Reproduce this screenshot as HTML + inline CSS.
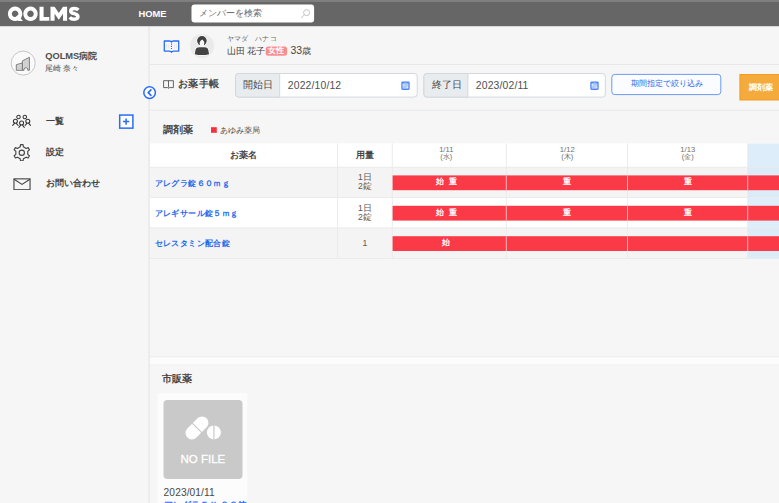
<!DOCTYPE html>
<html lang="ja">
<head>
<meta charset="utf-8">
<title>QOLMS</title>
<style>
*{box-sizing:border-box;margin:0;padding:0}
html,body{width:779px;height:503px;overflow:hidden;background:#f6f6f6;font-family:"Liberation Sans",sans-serif;color:#444}
.a{position:absolute;white-space:nowrap;line-height:1}
#home{left:138.5px;top:9.2px;font-size:9.4px;font-weight:bold;color:#fff}
#search{left:191.5px;top:4.5px;width:122.5px;height:18px}
#search span{left:7.6px;top:4.4px;font-size:8.6px;color:#6a6a6a}
.sm{font-size:9.2px;font-weight:bold;color:#444}

.th{top:150.9px;text-align:center;font-size:8.6px;font-weight:bold;color:#444}
.dt{width:120.5px;text-align:center;font-size:7.4px;color:#707070}
.dn{left:154.8px;font-size:8.4px;font-weight:bold;color:#2469ec;letter-spacing:.35px}
.ds{left:338px;width:54px;text-align:center;font-size:8.6px;color:#5a5a5a}
.rt{width:120.5px;text-align:center;font-size:8.2px;font-weight:bold;color:#fff}
</style>
</head>
<body>
<svg class="a" id="bg" style="left:0;top:0" width="779" height="503" viewBox="0 0 779 503">
<!-- page / sidebar -->
<rect x="0" y="0" width="779" height="503" fill="#f6f6f6"/>
<rect x="148.2" y="26" width="1.7" height="477" fill="#eaeaec"/>
<!-- header -->
<rect x="0" y="0" width="779" height="26.2" fill="#666"/>
<rect x="0" y="0" width="779" height="2" fill="#7f7f7f"/>
<rect x="191.5" y="4.4" width="122.6" height="18.2" rx="3" fill="#fff"/>
<!-- logo -->
<g fill="#fff" fill-rule="evenodd"><title>QOLMS</title>
<path d="M15.1 6.6 a7.2 7.2 0 1 0 0.001 0Z M15.1 10.5 a3.3 3.3 0 1 1 -0.001 0Z"/>
<path d="M15.2 17.2 L18.0 15.0 L22.9 21 H18.3Z"/>
<path d="M30.5 6.6 a7.2 7.2 0 1 0 0.001 0Z M30.5 10.5 a3.3 3.3 0 1 1 -0.001 0Z"/>
<path d="M39.5 6.8 h4.1 v10.3 h5.7 v3.7 h-9.8Z"/>
<path d="M50.5 20.8 V6.8 h4.1 l4.2 6.3 l4.2 -6.3 h4.1 V20.8 h-4.1 V13.7 l-4.2 6.1 l-4.2 -6.1 V20.8Z"/>
</g>
<path d="M78.4 9.9 C77.3 8.8 75.9 8.4 74.4 8.4 C72.3 8.4 70.7 9.3 70.7 10.9 C70.7 12.8 72.6 13.2 74.3 13.6 C76.2 14.1 77.9 14.6 77.9 16.6 C77.9 18.4 76.2 19.2 74.2 19.2 C72.4 19.2 70.8 18.6 69.7 17.3" fill="none" stroke="#fff" stroke-width="3.5"/>
<circle cx="149.6" cy="92.6" r="5.8" fill="#fff" stroke="#2a6df4" stroke-width="1.5"/><path d="M150.9 89.9 L148.2 92.6 L150.9 95.3" fill="none" stroke="#2a6df4" stroke-width="1.7" stroke-linecap="round" stroke-linejoin="round"/>
<rect x="119.7" y="115.05" width="13.2" height="13.1" fill="#fff" stroke="#2a6df4" stroke-width="1.5"/><path d="M126.1 118.4 V124.7 M122.95 121.55 H129.25" stroke="#2a6df4" stroke-width="1.5" fill="none"/>
<circle cx="23.2" cy="63.1" r="12" fill="#fafafa" stroke="#c6c6c6" stroke-width="1"/>
<!-- dividers -->
<rect x="150" y="63.9" width="629" height="1" fill="#e6e6e6"/>
<rect x="150" y="109.7" width="629" height="1" fill="#e6e6e6"/>
<!-- patient badge -->
<rect x="265.7" y="46.5" width="21.4" height="9.3" rx="2.5" fill="#f88e8e"/>
<!-- date inputs -->
<g fill="#fff" stroke="#d3d8dd" stroke-width="1">
<rect x="235.6" y="73.5" width="181.6" height="23.6" rx="3"/>
<rect x="423.9" y="73.5" width="181.4" height="23.6" rx="3"/>
</g>
<path d="M279.7 73.5 H238.6 Q235.6 73.5 235.6 76.5 V94.1 Q235.6 97.1 238.6 97.1 H279.7Z" fill="#e9ecef" stroke="#d3d8dd"/>
<path d="M467.9 73.5 H426.9 Q423.9 73.5 423.9 76.5 V94.1 Q423.9 97.1 426.9 97.1 H467.9Z" fill="#e9ecef" stroke="#d3d8dd"/>
<!-- filter button -->
<rect x="611.8" y="74.4" width="109" height="20.2" rx="3" fill="#fafcff" stroke="#6a9af2" stroke-width="1"/>
<!-- orange button -->
<rect x="739.9" y="74.5" width="45" height="25.5" fill="#f5aa3c" stroke="#f39b22" stroke-width="1"/>
<!-- legend -->
<rect x="211" y="127.2" width="5.8" height="5.6" fill="#f5303f"/>
<!-- table rows -->
<rect x="150" y="143.4" width="629" height="23.9" fill="#fff"/>
<rect x="150" y="167.3" width="629" height="30.2" fill="#f4f4f4"/>
<rect x="150" y="197.5" width="629" height="30.4" fill="#fff"/>
<rect x="150" y="227.9" width="629" height="30.5" fill="#f4f4f4"/>
<rect x="747.7" y="143.4" width="31.3" height="114.8" fill="#ddeefa"/>
<rect x="747.7" y="167.3" width="31.3" height="30.2" fill="#dbebf7"/>
<rect x="747.7" y="227.9" width="31.3" height="30.5" fill="#dbebf7"/>
<g fill="#ebebeb">
<rect x="150" y="166.8" width="629" height="1"/>
<rect x="150" y="197" width="629" height="1"/>
<rect x="150" y="227.4" width="629" height="1"/>
<rect x="150" y="258" width="629" height="1"/>
<rect x="337" y="143.4" width="1" height="114.8"/>
<rect x="391.8" y="143.4" width="1" height="114.8"/>
<rect x="505.8" y="143.4" width="1" height="114.8"/>
<rect x="627" y="143.4" width="1" height="114.8"/>
<rect x="747.2" y="143.4" width="1" height="114.8"/>
</g>
<!-- red bars -->
<g fill="#fb3a48">
<rect x="392.6" y="175.4" width="386.4" height="14.8"/>
<rect x="392.6" y="205.8" width="386.4" height="14.8"/>
<rect x="392.6" y="236.2" width="386.4" height="14.8"/>
</g>
<g fill="#fcb4b8">
<rect x="505.8" y="175.4" width="1" height="14.8"/><rect x="627" y="175.4" width="1" height="14.8"/><rect x="747.2" y="175.4" width="1" height="14.8"/>
<rect x="505.8" y="205.8" width="1" height="14.8"/><rect x="627" y="205.8" width="1" height="14.8"/><rect x="747.2" y="205.8" width="1" height="14.8"/>
<rect x="505.8" y="236.2" width="1" height="14.8"/><rect x="627" y="236.2" width="1" height="14.8"/><rect x="747.2" y="236.2" width="1" height="14.8"/>
</g>
<!-- section divider band -->
<rect x="150" y="356.6" width="629" height="8.2" fill="#fcfcfc"/>
<rect x="150" y="356.2" width="629" height="1" fill="#ebebeb"/>
<rect x="150" y="364.3" width="629" height="1" fill="#efefef"/>
<!-- OTC card -->
<rect x="157.5" y="393.4" width="89.8" height="115" fill="#fcfcfc"/>
<rect x="163.5" y="400" width="79" height="79" rx="4" fill="#c9c9c9"/>
<g transform="rotate(-45 197 427.9)"><rect x="183.4" y="421.5" width="27.2" height="12.8" rx="6.4" fill="#fff"/><rect x="196.4" y="420" width="1.2" height="16" fill="#c9c9c9"/></g>
<circle cx="213.9" cy="432.4" r="7" fill="#fff"/><rect x="213.3" y="424" width="1.2" height="17" fill="#c9c9c9"/>
</svg>
<div class="a" id="home">HOME</div>
<div class="a" id="search"><span class="a">メンバーを検索</span>
<svg class="a" style="left:107px;top:3px" width="12" height="12" viewBox="0 0 12 12"><circle cx="7.6" cy="4.6" r="3" fill="none" stroke="#bbb" stroke-width="0.9"/><path d="M5.4 6.8 L2.2 10" stroke="#bbb" stroke-width="0.9" fill="none"/></svg>
</div>


<!-- sidebar -->
<svg class="a" style="left:10.7px;top:50.6px" width="25" height="25" viewBox="0 0 25 25"><path d="M5.3 13.7 L11.4 12 V19.3 H5.3 Z" fill="#dedede" stroke="#707070" stroke-width="0.9" stroke-linejoin="round"/><path d="M11.4 9.9 L18.4 6.3 V19.3 H16.8 V17.6 L14.9 16.7 L13 17.6 V19.3 H11.4 Z" fill="#dadada" stroke="#707070" stroke-width="0.9" stroke-linejoin="round"/><path d="M7.3 13.6V19M9.3 13V19M5.6 15.6H11M5.6 17.4H11" stroke="#bbb" stroke-width=".4"/><path d="M13.3 9.6V16.5M15 8.6V16M16.7 7.8V16.8" stroke="#bdbdbd" stroke-width=".5"/></svg>
<div class="a" style="left:45.2px;top:51.6px;font-size:9.3px;font-weight:bold;color:#505050">QOLMS病院</div>
<div class="a" style="left:45.2px;top:65.3px;font-size:8.2px;color:#555">尾崎 奈々</div>


<div class="a sm" style="left:45.5px;top:117px">一覧</div>
<div class="a sm" style="left:45.5px;top:148px">設定</div>
<div class="a sm" style="left:45.5px;top:178.5px">お問い合わせ</div>
<!-- people icon -->
<svg class="a" style="left:10px;top:112px" width="24" height="18" viewBox="0 0 24 18" fill="none" stroke="#333" stroke-width="1.05" stroke-linecap="round" stroke-linejoin="round"><circle cx="8.5" cy="5" r="1.75"/><circle cx="14.8" cy="5" r="1.75"/><circle cx="5.4" cy="9.2" r="2"/><circle cx="11.6" cy="11" r="2"/><circle cx="17.8" cy="9.2" r="2"/><path d="M2.7 13.4 L4.5 11.3 M6.3 11.3 L8.1 13.4 M8.9 15.4 L10.7 13.1 M12.5 13.1 L14.3 15.4 M15.1 13.4 L16.9 11.3 M18.7 11.3 L20.5 13.4"/></svg>
<!-- gear -->
<svg class="a" style="left:12.6px;top:143.5px" width="17.6" height="17.6" viewBox="0 0 18 18" fill="none" stroke="#444" stroke-width="1.15" stroke-linejoin="round"><circle cx="9" cy="9" r="2.7"/><path d="M7.37 2.91 L7.69 0.70 L10.31 0.70 L10.63 2.91 L13.45 4.55 L15.53 3.71 L16.84 5.99 L15.09 7.37 L15.09 10.63 L16.84 12.01 L15.53 14.29 L13.45 13.45 L10.63 15.09 L10.31 17.30 L7.69 17.30 L7.37 15.09 L4.55 13.45 L2.47 14.29 L1.16 12.01 L2.91 10.63 L2.91 7.37 L1.16 5.99 L2.47 3.71 L4.55 4.55Z"/></svg>
<!-- mail -->
<svg class="a" style="left:12.7px;top:177.8px" width="18" height="12.6" viewBox="0 0 18.4 13" fill="none" stroke="#444" stroke-width="1.15"><rect x="0.9" y="0.9" width="16.6" height="11.2"/><path d="M1 1.2 L9.2 6.6 L17.4 1.2"/></svg>

<!-- patient header -->
<svg class="a" style="left:163px;top:39.9px" width="17" height="14" viewBox="0 0 17 14" fill="none" stroke="#2a6df4" stroke-width="1.3" stroke-linejoin="round"><path d="M1.3 1 H6.4 Q8.3 1 8.5 2.2 Q8.7 1 10.6 1 H15.7 V11.1 H10.6 Q8.7 11.1 8.5 12.4 Q8.3 11.1 6.4 11.1 H1.3 Z" fill="#f7f7f9"/><path d="M8.5 3.6 V10" stroke-dasharray="1.1 1.1" stroke-width="1.1"/><path d="M3.6 4.2V8.4M5.4 4.2V8.4M11.6 4.2V8.4M13.4 4.2V8.4" stroke="#e4e6ee" stroke-width=".9"/></svg>
<div class="a" style="left:190px;top:33.5px;width:24px;height:24px;border-radius:50%;background:#eaeaea;overflow:hidden">
<svg width="24" height="24" viewBox="0 0 24 24"><g stroke="#fff" stroke-width="1.3" fill="#fff"><ellipse cx="11.9" cy="6.8" rx="4.8" ry="4.8"/><path d="M4.7 20.2 L5.4 16.4 Q5.9 13.2 9.2 13.2 H14.6 Q17.9 13.2 18.4 16.4 L19.1 20.2 Q11.9 21.9 4.7 20.2Z"/></g><ellipse cx="11.9" cy="6.8" rx="4.8" ry="4.8" fill="#404040"/><path d="M9.7 8.2 Q10.5 6.2 12.5 5.5 Q13.3 7 14.2 7.6 V10.2 Q13.8 11.6 13.2 12 V13.6 H10.6 V12 Q9.9 11.4 9.7 10.2Z" fill="#f6f6f6"/><path d="M4.7 20.2 L5.4 16.4 Q5.9 13.2 9.2 13.2 H14.6 Q17.9 13.2 18.4 16.4 L19.1 20.2 Q11.9 21.9 4.7 20.2Z" fill="#444"/></svg></div>
<div class="a" style="left:226.5px;top:35px;font-size:7.4px;color:#666;letter-spacing:.2px">ヤマダ　ハナコ</div>
<div class="a" style="left:226.5px;top:46.8px;font-size:8.8px;color:#444">山田 花子</div>
<div class="a" style="left:268px;top:47.2px;font-size:8.2px;font-weight:bold;color:#fff">女性</div>
<div class="a" style="left:290.5px;top:46px;font-size:10.4px;color:#444">33<span style="font-size:8.6px">歳</span></div>

<!-- toolbar -->
<svg class="a" style="left:163px;top:80px" width="11" height="9" viewBox="0 0 11 9" fill="none" stroke="#555" stroke-width="0.9"><path d="M0.6 0.7 H10.4 V7.6 H6.4 L5.5 8.4 L4.6 7.6 H0.6 Z M5.5 0.7 V7.6"/></svg>
<div class="a" style="left:178px;top:79.4px;font-size:9.8px;letter-spacing:.25px;font-weight:bold;color:#484848">お薬手帳</div>

<div class="a" style="left:243.4px;top:80.1px;font-size:9.6px;color:#444">開始日</div>
<div class="a" style="left:287.8px;top:81px;font-size:10.4px;letter-spacing:.15px;color:#505050">2022/10/12</div>
<svg class="a cal" style="left:401px;top:81.2px" width="9" height="9" viewBox="0 0 9 9"><rect x="0.3" y="0.4" width="8.4" height="8.5" rx="1.3" fill="#4f87f6"/><rect x="1.5" y="2.2" width="6" height="5.5" rx=".5" fill="#b3cbfa"/><rect x="3.2" y="0.4" width="2.6" height="1.3" fill="#8db1f9"/><circle cx="2.5" cy="4" r=".8" fill="#eef3fe"/><circle cx="6.4" cy="6.3" r=".8" fill="#eef3fe"/></svg>

<div class="a" style="left:432px;top:80.1px;font-size:9.6px;color:#444">終了日</div>
<div class="a" style="left:475.8px;top:81px;font-size:10.4px;letter-spacing:.15px;color:#505050">2023/02/11</div>
<svg class="a cal" style="left:589.5px;top:81.2px" width="9" height="9" viewBox="0 0 9 9"><rect x="0.3" y="0.4" width="8.4" height="8.5" rx="1.3" fill="#4f87f6"/><rect x="1.5" y="2.2" width="6" height="5.5" rx=".5" fill="#b3cbfa"/><rect x="3.2" y="0.4" width="2.6" height="1.3" fill="#8db1f9"/><circle cx="2.5" cy="4" r=".8" fill="#eef3fe"/><circle cx="6.4" cy="6.3" r=".8" fill="#eef3fe"/></svg>

<div class="a" style="left:631px;top:79.9px;font-size:7.7px;color:#2e6ee6">期間指定で絞り込み</div>
<div class="a" style="left:749px;top:83px;font-size:8.3px;font-weight:bold;color:#fff">調剤薬</div>

<!-- table -->
<div class="a" style="left:162.5px;top:125px;font-size:9.6px;font-weight:bold;color:#444">調剤薬</div>
<div class="a" style="left:220px;top:125.7px;font-size:8.4px;color:#4d4d4d">あゆみ薬局</div>


<div class="a th" style="left:150px;width:187px">お薬名</div>
<div class="a th" style="left:338px;width:54px">用量</div>
<div class="a dt" style="left:386px;top:145.5px;font-size:7.6px">1/11</div><div class="a dt" style="left:386px;top:152.6px">(水)</div>
<div class="a dt" style="left:507px;top:145.5px;font-size:7.6px">1/12</div><div class="a dt" style="left:507px;top:152.6px">(木)</div>
<div class="a dt" style="left:627.5px;top:145.5px;font-size:7.6px">1/13</div><div class="a dt" style="left:627.5px;top:152.6px">(金)</div>

<div class="a dn" style="top:178.7px">アレグラ錠６０ｍｇ</div>
<div class="a dn" style="top:209.2px">アレギサール錠５ｍｇ</div>
<div class="a dn" style="top:239.2px">セレスタミン配合錠</div>
<div class="a ds" style="top:173.4px">1日</div><div class="a ds" style="top:182.4px">2錠</div>
<div class="a ds" style="top:203.9px">1日</div><div class="a ds" style="top:212.9px">2錠</div>
<div class="a ds" style="top:238.8px">1</div>

<div class="a rt" style="left:386px;top:178.1px">始&nbsp; 重</div>
<div class="a rt" style="left:507px;top:178.1px">重</div>
<div class="a rt" style="left:627.5px;top:178.1px">重</div>
<div class="a rt" style="left:386px;top:208.6px">始&nbsp; 重</div>
<div class="a rt" style="left:507px;top:208.6px">重</div>
<div class="a rt" style="left:627.5px;top:208.6px">重</div>
<div class="a rt" style="left:386px;top:239.1px">始</div>

<!-- divider band -->

<!-- OTC -->
<div class="a" style="left:162px;top:374px;font-size:9.6px;font-weight:bold;color:#444">市販薬</div>
<div class="a" style="left:180.5px;top:453.5px;font-size:11.5px;color:#fff;-webkit-text-stroke:.3px #fff">NO FILE</div>
<div class="a" style="left:163.6px;top:488px;font-size:10.2px;letter-spacing:.1px;color:#484848">2023/01/11</div>
<div class="a" style="left:163.6px;top:501.3px;font-size:9.2px;font-weight:bold;color:#2a6df4">アレグラＦＸ ２８錠</div>

</body>
</html>
